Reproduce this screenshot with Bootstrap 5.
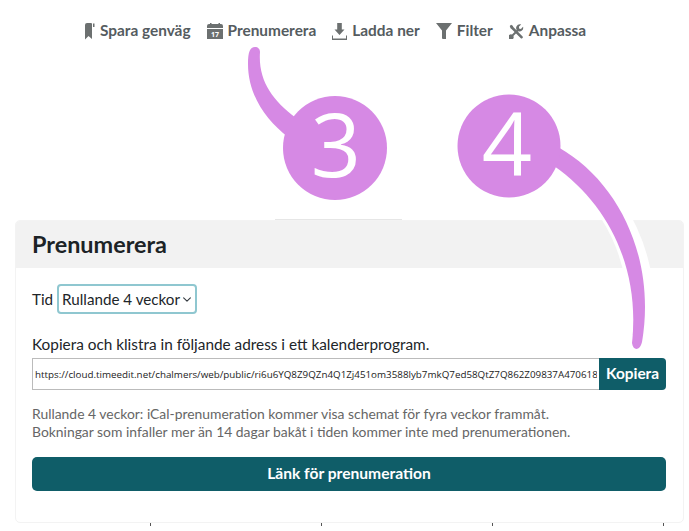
<!DOCTYPE html>
<html lang="sv">
<head>
<meta charset="utf-8">
<title>Prenumerera</title>
<link href="https://cdn.jsdelivr.net/npm/bootstrap@5.3.0/dist/css/bootstrap.min.css" rel="stylesheet">
<style>
html,body{height:531px;overflow:hidden}
body{background:#fff;font-family:"Lato","Open Sans","Liberation Sans",sans-serif;color:#212529;position:relative}
.tool-strip{height:62px;padding:0 18px 0 0;gap:16px;color:#555c5f;font-weight:700;font-size:15.4px}
.tool-item{gap:5px;line-height:1}
.tool-item svg{fill:#6c7070;display:block}
.sub-panel{position:absolute;left:15px;top:220px;width:669px;height:303px;border:1px solid #f3f3f3;border-radius:5px;background:#fff}
.top-sliver{position:absolute;left:275px;top:219px;width:127px;height:1px;background:#e6e6e6}
.sub-head{background:#f2f2f2;border:0;height:47px;padding:0 16px;font-size:23.4px;font-weight:700;color:#1c2326;line-height:47px;border-radius:4px 4px 0 0!important}
.sub-body{padding:16px 17px 0 16px;font-size:15.2px}
.time-row{height:30px;gap:4px}
.time-select{width:140px;height:30px;padding:0 0 0 3px;font-size:15.2px;border:2px solid #8fc7d0;border-radius:4px;background-position:right 2px center;background-size:12px 9px;color:#212529;font-family:inherit;box-shadow:none}
.addr-label{margin:18px 0 2px;line-height:24px;font-size:15.35px}
.addr-input{height:32px;font-size:9.8px;font-family:"Open Sans",sans-serif;padding:0 2px;border:1px solid #bbb;border-radius:0;color:#222}
.copy-btn,.link-btn{background:#0f5d68;border:0;color:#fff;font-weight:700}
.copy-btn{width:67px;height:32px;font-size:15.4px;padding:0;border-radius:0 4px 4px 0!important}
.help-text{margin:15px 0 17px;color:#666;font-size:13.9px;line-height:17.5px}
.link-btn{height:34px;font-size:15.6px;padding:0;border-radius:5px}
.tick-mark{position:absolute;top:523px;width:1px;height:3px;background:#555}
.anno-layer{position:absolute;left:0;top:0;width:689px;height:531px;pointer-events:none}
.anno-num{font-family:"Open Sans",sans-serif;font-size:88px;fill:#fff;text-anchor:middle}
.cal-day{font-family:"Open Sans",sans-serif;font-size:7px;fill:#fff;text-anchor:middle}
</style>
</head>
<body>
<nav class="tool-strip d-flex justify-content-center align-items-center">
  <span class="tool-item d-flex align-items-center">
    <svg width="10" height="17" viewBox="0 0 10 17"><path d="M0 2q0-2 2-2h4q1 0 1 1v15l-3.500-3L0 16.500zM8 .5h1.500V4L8 4z"/></svg>
    Spara genväg
  </span>
  <span class="tool-item d-flex align-items-center">
    <svg width="16" height="16" viewBox="0 0 16 16"><path d="M2 1h1V0h1.500v1h7V0H13v1h1a2 2 0 0 1 2 2v2H0V3a2 2 0 0 1 2-2zM0 6h16v10H0z"/><text class="cal-day" x="8" y="14">17</text></svg>
    Prenumerera
  </span>
  <span class="tool-item d-flex align-items-center">
    <svg width="15" height="17" viewBox="0 0 15 17"><path d="M5.200 0h4.600v6.500h2.700L7.500 12 2.500 6.500h2.700z"/><path d="M0 12.500h1v3h13v-3h1V17H0z"/></svg>
    Ladda ner
  </span>
  <span class="tool-item d-flex align-items-center">
    <svg width="16" height="16" viewBox="0 0 16 16"><path d="M0 0h16l-6 7.500V16H6.500l-.5-1V7.500z"/></svg>
    Filter
  </span>
  <span class="tool-item d-flex align-items-center">
    <svg width="15" height="15" viewBox="0 0 16 16"><path d="M.8 2.200 2.200.8l1.800 1 .6 1.500 9.900 9.900a1.100 1.100 0 0 1 .3 1.200l-1 1a1.100 1.100 0 0 1-1.200-.3L2.700 5.200 1.600 4.400z"/><path d="M11.500.2a3.900 3.900 0 0 1 1.500.200L10.700 2.700v2l2 .6 2.300-2.300a4 4 0 0 1-5.200 4.800L4.700 12.800a3 3 0 1 1-1.500-1.500l5-5A4 4 0 0 1 11.500.2z"/></svg>
    Anpassa
  </span>
</nav>

<i class="top-sliver"></i>
<section class="card sub-panel">
  <h1 class="card-header sub-head m-0">Prenumerera</h1>
  <div class="card-body sub-body">
    <div class="time-row d-flex align-items-center">
      <label for="tid">Tid</label>
      <select id="tid" class="form-select time-select"><option>Rullande 4 veckor</option></select>
    </div>
    <p class="addr-label">Kopiera och klistra in följande adress i ett kalenderprogram.</p>
    <div class="input-group flex-nowrap">
      <input class="form-control addr-input" readonly value="https://cloud.timeedit.net/chalmers/web/public/ri6u6YQ8Z9QZn4Q1Zj451om3588lyb7mkQ7ed58QtZ7Q862Z09837A470618Y5Q7.ics">
      <button class="btn copy-btn" type="button">Kopiera</button>
    </div>
    <p class="help-text">Rullande 4 veckor: iCal-prenumeration kommer visa schemat för fyra veckor frammåt.<br>Bokningar som infaller mer än 14 dagar bakåt i tiden kommer inte med prenumerationen.</p>
    <button class="btn link-btn w-100" type="button">Länk för prenumeration</button>
  </div>
</section>
<i class="tick-mark" style="left:150px"></i>
<i class="tick-mark" style="left:321px"></i>
<i class="tick-mark" style="left:492px"></i>
<i class="tick-mark" style="left:663px"></i>

<svg class="anno-layer" viewBox="0 0 689 531" aria-hidden="true">
  <path d="M557 158C615 192 652 262 638 345" fill="none" stroke="#fff" stroke-width="27"/>
  <path d="M255 47C250 47 248 52 248 64C248 95 266 120 288 137L296 118C272 100 258 80 260 52C260 49 258 47 255 47Z" fill="#d689e4"/>
  <circle cx="335" cy="148" r="52" fill="#d689e4"/>
  <path d="M558 147C620 182 656 260 642 342C640 351 633 351 632 343C640 270 610 205 554 166Z" fill="#d689e4"/>
  <circle cx="509" cy="146" r="51.500" fill="#d689e4"/>
  <text class="anno-num" x="336" y="177">3</text>
  <text class="anno-num" x="507" y="176">4</text>
</svg>
<script src="https://cdn.jsdelivr.net/npm/bootstrap@5.3.0/dist/js/bootstrap.bundle.min.js"></script>
</body>
</html>
